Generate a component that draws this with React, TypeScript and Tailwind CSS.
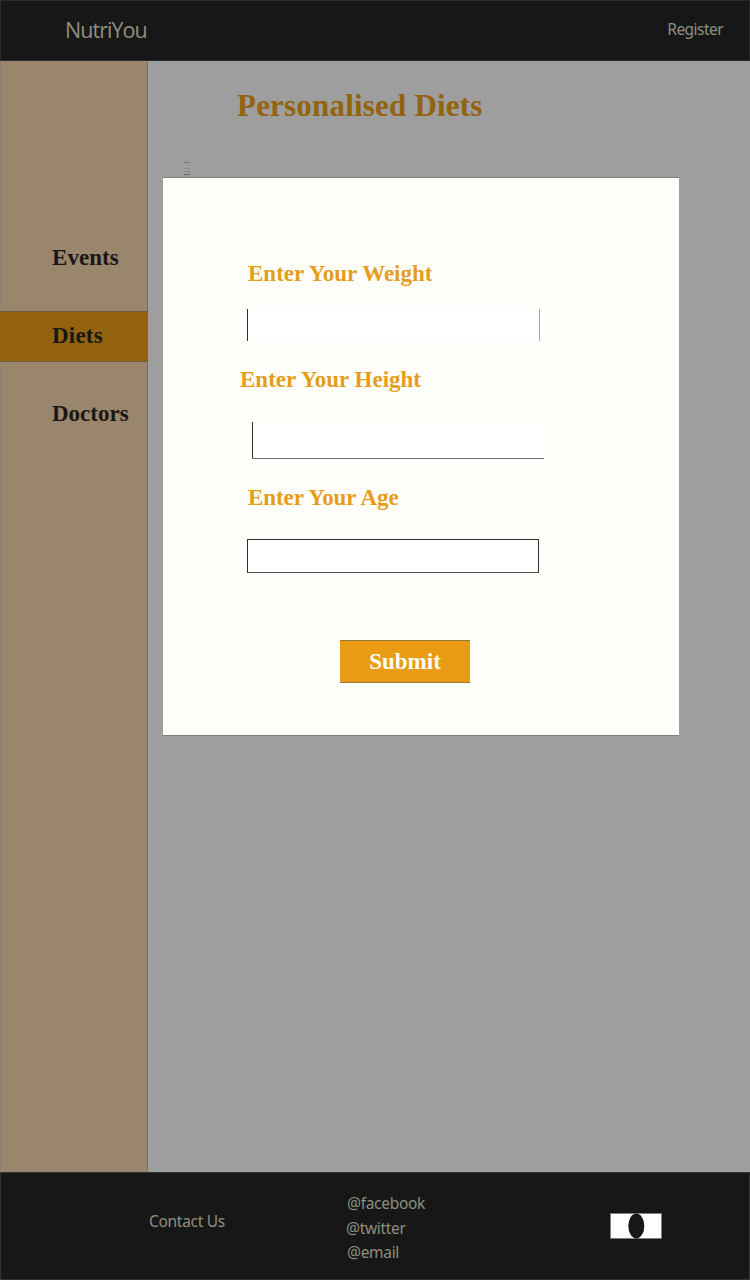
import React from "react";

const serif = "font-['Liberation_Serif',serif] font-bold";

function Header() {
  return (
    <header className="flex h-[61px] items-start justify-between border border-[#2b2d2c] bg-[#171717] pl-[64px] pr-[26px] text-[#8f8f7d]">
      <span className="mt-[12px] font-['Open_Sans',sans-serif] text-[21.5px] leading-[34px] tracking-[-0.95px]">
        NutriYou
      </span>
      <span className="mt-[16px] text-[15.5px] leading-6 tracking-[-0.55px]">Register</span>
    </header>
  );
}

function Sidebar() {
  return (
    <nav
      className={`flex w-[148px] flex-col border-l border-r border-l-[#89827b] border-r-[#73706c] bg-[#9a866d] pt-[172px] text-[23px] text-[#191816] ${serif}`}
    >
      <a className="flex h-[50px] items-center pl-[51px] tracking-[0.05px]">Events</a>
      <a className="-mx-px mt-[28px] flex h-[51px] items-center border-y border-[#6f5b3c] bg-[#936310] pb-px pl-[52px] tracking-[0.2px]">
        Diets
      </a>
      <a className="mt-[27px] flex h-[50px] items-center pl-[51px]">Doctors</a>
    </nav>
  );
}

function MenuLines() {
  return (
    <svg className="ml-[36px] mt-[34px] block" width="6" height="16" viewBox="0 0 6 16" shapeRendering="crispEdges">
      <rect y="3" width="6" height="1" fill="#777" />
      <rect y="9" width="6" height="1" fill="#898989" />
      <rect y="12" width="6" height="1" fill="#898989" />
      <rect y="15" width="6" height="1" fill="#666" />
    </svg>
  );
}

function DietForm() {
  return (
    <form
      className={`absolute left-[163px] top-[177px] flex h-[559px] w-[516px] flex-col items-start border-y border-[#7f7f7c] bg-[#fefffa] pt-[82px] text-[23px] leading-[28px] text-[#e69d1c] ${serif}`}
    >
      <label className="ml-[85px] whitespace-nowrap">Enter Your Weight</label>
      <input className="ml-[84px] mt-[21px] h-[32px] w-[293px] border-x border-l-[#303030] border-r-[#a5a5a5] bg-white outline-none" />
      <label className="ml-[77px] mt-[25px] whitespace-nowrap">Enter Your Height</label>
      <input className="ml-[89px] mt-[28px] h-[37px] w-[292px] border-b border-l border-b-[#707070] border-l-[#303030] bg-white outline-none" />
      <label className="ml-[85px] mt-[25px] whitespace-nowrap tracking-[-0.08px]">Enter Your Age</label>
      <input className="ml-[84px] mt-[27px] h-[34px] w-[292px] border border-[#303030] border-b-[#555] bg-white outline-none" />
      <button
        type="button"
        className="ml-[177px] mt-[67px] flex h-[43px] w-[130px] items-center justify-center border-y border-[#94783f] bg-[#e99b13] text-[23px] text-[#fffffa]"
      >
        Submit
      </button>
    </form>
  );
}

function Footer() {
  return (
    <footer className="flex h-[108px] items-start border border-[#333] bg-[#171717] text-[15.5px] tracking-[-0.3px] text-[#8f8f7d]">
      <span className="ml-[148px] mt-[36px] w-[196px] leading-6">Contact Us</span>
      <ul className="mt-[18px] w-[265px] leading-[24.6px]">
        <li className="pl-[2px]">@facebook</li>
        <li className="pl-px">@twitter</li>
        <li className="pl-[2px]">@email</li>
      </ul>
      <svg className="mt-[40px]" width="52" height="26" viewBox="0 0 52 26">
        <rect x="0.5" y="0.5" width="51" height="25" fill="#fff" stroke="#777" strokeWidth="0.5" />
        <ellipse cx="26.3" cy="13" rx="8" ry="12.4" fill="#171717" />
      </svg>
    </footer>
  );
}

export default function App() {
  return (
    <div className="relative flex h-[1280px] w-[750px] flex-col overflow-hidden bg-[#9e9e9e] font-['Noto_Sans','Open_Sans',sans-serif]">
      <Header />
      <div className="flex flex-1">
        <Sidebar />
        <main className="flex-1">
          <h1 className={`ml-[89px] mt-[26px] text-[31px] leading-[38px] tracking-[0.2px] text-[#936310] ${serif}`}>
            Personalised Diets
          </h1>
          <MenuLines />
        </main>
      </div>
      <Footer />
      <DietForm />
    </div>
  );
}
